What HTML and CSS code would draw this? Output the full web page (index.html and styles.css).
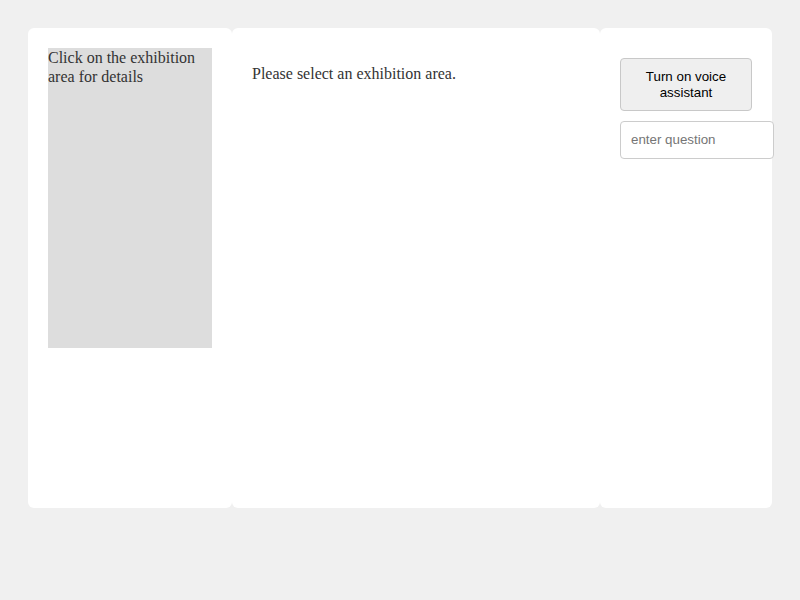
FILE: index.html
```html
<!DOCTYPE html>
<html>
<head>
<meta charset="utf-8">
<link rel="stylesheet" href="styles.css">
</head>
<body>
<div class="layout">
  <div class="panel panel-left">
    <div class="map">Click on the exhibition area for details</div>
  </div>
  <div class="panel panel-center">
    <p class="info">Please select an exhibition area.</p>
  </div>
  <div class="panel panel-right">
    <button class="voice-btn">Turn on voice assistant</button>
    <input class="question" type="text" placeholder="enter question">
  </div>
</div>
</body>
</html>
```

FILE: styles.css
```css
html, body {
  margin: 0;
  padding: 0;
  background: #f0f0f0;
}
body {
  font-family: "Liberation Serif", "Times New Roman", serif;
  font-size: 16px;
  line-height: 19px;
  color: #333;
}
.layout {
  display: flex;
  padding: 28px;
}
.panel {
  background: #fff;
  border-radius: 6px;
  height: 480px;
  padding: 20px;
  box-sizing: border-box;
}
.panel-left {
  width: 204px;
}
.panel-center {
  width: 368px;
}
.panel-right {
  width: 172px;
}
.map {
  background: #ddd;
  height: 300px;
}
.info {
  margin: 16px 0;
}
.voice-btn {
  display: block;
  width: 100%;
  margin: 10px 0;
  padding: 10px;
  font-family: "Liberation Sans", Arial, sans-serif;
  font-size: 13.33px;
  line-height: 15.5px;
  color: #000;
  background: #efefef;
  border: 1px solid #c8c8c8;
  border-radius: 4px;
}
.question {
  display: block;
  width: 100%;
  padding: 10px;
  border: 1px solid #ccc;
  border-radius: 4px;
  font-family: "Liberation Sans", Arial, sans-serif;
  font-size: 13.33px;
  line-height: 16px;
  color: #333;
}
.question::placeholder {
  color: #757575;
}
```
